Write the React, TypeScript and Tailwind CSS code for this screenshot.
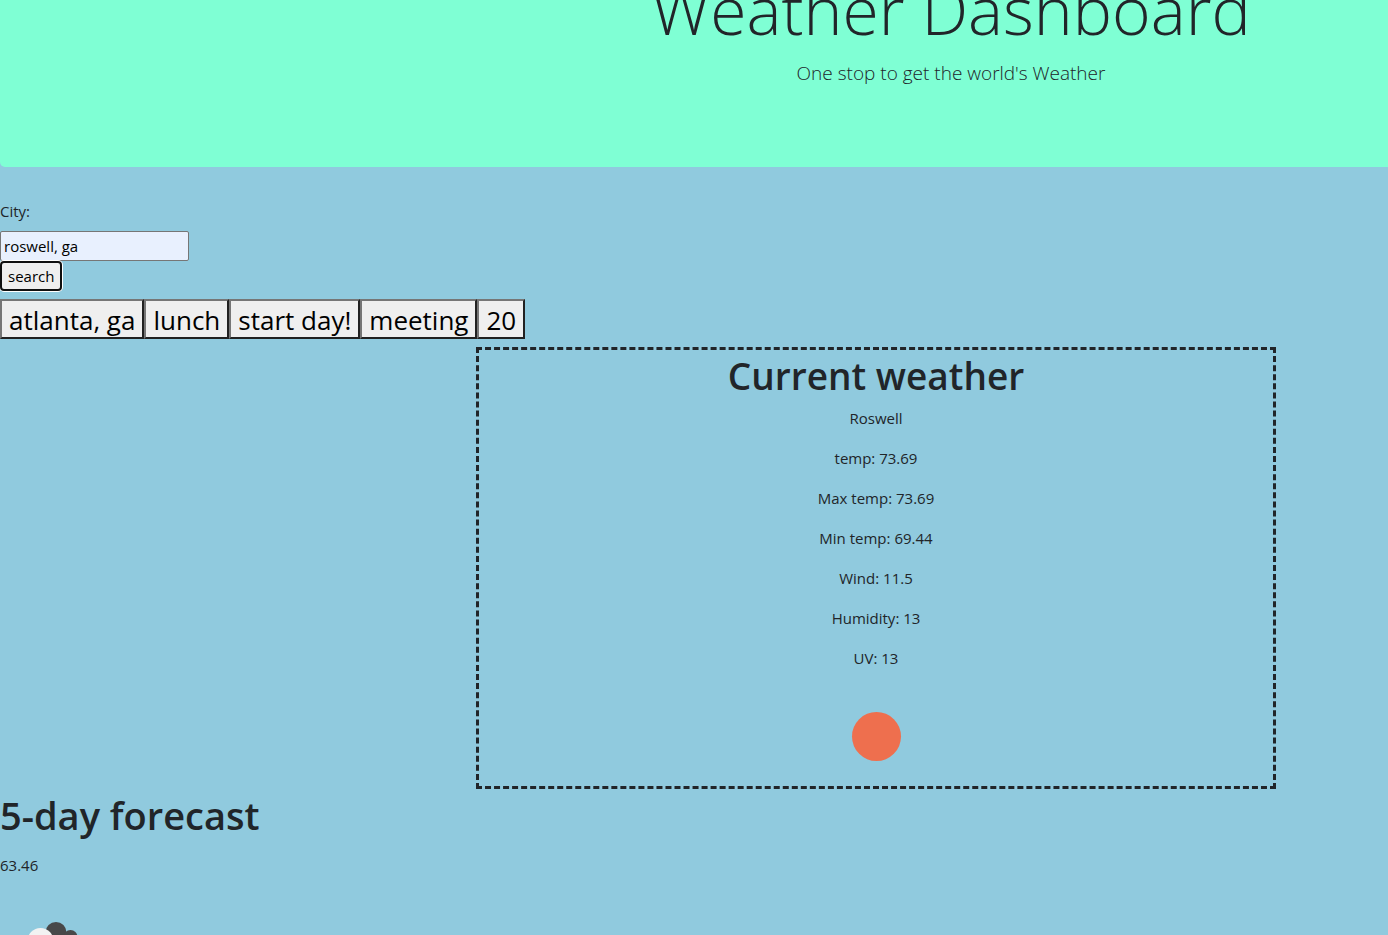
const history = ["atlanta, ga", "lunch", "start day!", "meeting", "20"];

const readings = [
  "Roswell",
  "temp: 73.69",
  "Max temp: 73.69",
  "Min temp: 69.44",
  "Wind: 11.5",
  "Humidity: 13",
  "UV: 13",
];

function SunIcon() {
  return (
    <svg viewBox="0 0 100 100" className="mx-auto block size-[100px]" role="img" aria-label="Clear sky">
      <circle cx="50.5" cy="50.5" r="24.5" fill="#ee6f4e" />
    </svg>
  );
}

function CloudIcon() {
  return (
    <svg viewBox="0 0 100 100" className="block size-[100px] shrink-0" role="img" aria-label="Broken clouds">
      <g fill="#484849">
        <circle cx="56" cy="39.5" r="10.5" />
        <circle cx="70.5" cy="44" r="7" />
        <path d="M50 42h27v16H50z" />
      </g>
      <g fill="#f2f2f2">
        <circle cx="40.5" cy="48" r="13" />
        <path d="M26 52h44v16H26z" />
      </g>
    </svg>
  );
}

export default function App() {
  return (
    <div className="h-screen overflow-hidden bg-[#90cade] font-['Open_Sans','Noto_Sans',sans-serif] text-[15px] leading-6 text-[#212529]">
      <header className="flex h-[167px] flex-col justify-end overflow-hidden rounded-bl-[5px] bg-[#7fffd4] pb-[78px] pl-[514px] text-center font-light">
        <h1 className="mb-2 shrink-0 text-[66px] leading-[80px] whitespace-nowrap">Weather Dashboard</h1>
        <p className="shrink-0 text-[19px] leading-8">One stop to get the world's Weather</p>
      </header>

      <main>
        <form className="flex flex-col items-start pt-8" onSubmit={(e) => e.preventDefault()}>
          <label htmlFor="city" className="mb-2">
            City:
          </label>
          <input
            id="city"
            type="text"
            defaultValue="roswell, ga"
            className="h-[30px] w-[189px] rounded-[2px] border border-[#767676] bg-[#e8f0fe] px-[3px] text-black"
          />
          <button
            type="submit"
            className="h-[30px] rounded-[4px] border-2 border-[#101010] bg-[#efefef] px-1.5 text-black shadow-[0_0_0_1px_#ffffff]"
          >
            search
          </button>
        </form>

        <div className="my-2 flex">
          {history.map((name) => (
            <button
              key={name}
              type="button"
              className="h-10 border-2 border-t-[#767676] border-r-[#212121] border-b-[#212121] border-l-[#767676] bg-[#efefef] px-[7px] pt-0.5 text-[26px] leading-8 whitespace-nowrap text-black"
            >
              {name}
            </button>
          ))}
        </div>

        <section className="ml-[476px] max-w-[800px] border-[3px] border-dashed border-[#212529] text-center">
          <h2 className="pb-1 text-[37px] leading-[52px] font-semibold">Current weather</h2>
          {readings.map((line) => (
            <p key={line} className="mb-4">
              {line}
            </p>
          ))}
          <SunIcon />
        </section>

        <section>
          <h2 className="pb-3 text-[38px] leading-[52px] font-semibold">5-day forecast</h2>
          <p className="mb-4">63.46</p>
          <CloudIcon />
        </section>
      </main>
    </div>
  );
}
